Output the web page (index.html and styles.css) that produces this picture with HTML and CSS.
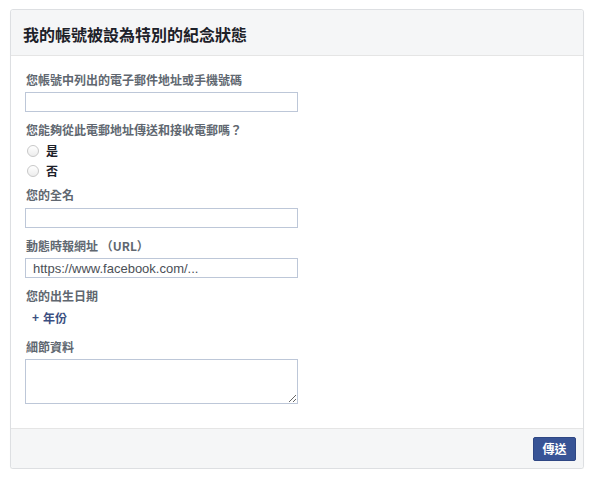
FILE: index.html
```html
<!DOCTYPE html>
<html lang="zh-Hant">
<head>
<meta charset="utf-8">
<title>紀念狀態</title>
<link rel="stylesheet" href="styles.css">
</head>
<body>
<div class="page">
  <form class="card">
    <div class="card-header"><h2 class="title">我的帳號被設為特別的紀念狀態</h2></div>
    <div class="card-body">
      <label class="label first">您帳號中列出的電子郵件地址或手機號碼</label>
      <input class="field" type="text">
      <label class="label gap10">您能夠從此電郵地址傳送和接收電郵嗎？</label>
      <div class="radios">
        <label class="radio-row"><span class="radio"></span><span class="radio-text">是</span></label>
        <label class="radio-row"><span class="radio"></span><span class="radio-text">否</span></label>
      </div>
      <label class="label after-radio">您的全名</label>
      <input class="field" type="text">
      <label class="label gap10">動態時報網址 （URL）</label>
      <input class="field url" type="text" placeholder="https://www.facebook.com/...">
      <label class="label gap10">您的出生日期</label>
      <div class="year"><span class="plus">+</span><span>年份</span></div>
      <label class="label detail">細節資料</label>
      <textarea class="area"></textarea>
    </div>
    <div class="card-footer"><button class="send" type="button">傳送</button></div>
  </form>
</div>
</body>
</html>
```
FILE: styles.css
```css
* { box-sizing: border-box; }
html, body { margin: 0; padding: 0; background: #fff; }
body { font-family: "Noto Sans CJK TC", "Liberation Sans", sans-serif; color: #1d2129; }
.page { padding: 9px 17px 0 10px; }
.card {
  display: flex; flex-direction: column;
  width: 574px;
  border: 1px solid #dddfe2;
  border-radius: 3px;
  background: #fff;
  box-shadow: 0 1px 1px rgba(0,0,0,0.04);
}
.card-header {
  height: 46px;
  background: #f5f6f7;
  border-bottom: 1px solid #e5e5e5;
  display: flex; align-items: center;
  padding: 2px 0 0 12px;
  border-radius: 3px 3px 0 0;
}
.title { margin: 0; font-size: 16px; font-weight: bold; color: #1d2129; line-height: 20px; height: 20px; }
.card-body { display: flex; flex-direction: column; align-items: flex-start; padding: 16px 14px 24px 14px; }
.label {
  display: block; height: 16px;
  font-size: 12px; font-weight: bold; color: #606770; line-height: 16px;
  margin: 0 0 4px 0; padding-left: 1px;
  white-space: nowrap;
}
.label.gap10 { margin-top: 10px; }
.label.after-radio { margin-top: 6px; margin-bottom: 5px; }
.label.detail { margin-top: 13px; }
.field {
  display: block;
  width: 273px; height: 20px;
  border: 1px solid #bdc7d8;
  margin: 0; padding: 0 7px;
  font-family: "Liberation Sans", "Noto Sans CJK TC", sans-serif;
  font-size: 13px; color: #1d2129;
  outline: none;
  border-radius: 0;
}
.field::placeholder { color: #4b4f56; }
.radios { display: flex; flex-direction: column; margin-top: -1px; }
.radio-row { display: flex; align-items: center; height: 20px; padding-left: 2px; }
.radio {
  width: 12px; height: 12px; border-radius: 50%;
  border: 1px solid #c8c8c8;
  background: linear-gradient(#ffffff, #ededed);
}
.radio-text { font-size: 12px; font-weight: bold; color: #1d2129; margin-left: 7px; line-height: 16px; height: 16px; }
.year {
  display: flex; align-items: center; height: 16px;
  font-size: 12px; font-weight: bold; color: #3b4f81; line-height: 16px;
  margin: 2px 0 0 7px;
}
.plus { font-family: "Liberation Sans", sans-serif; font-size: 12px; margin-right: 4px; }
.area {
  display: block;
  width: 273px; height: 45px;
  border: 1px solid #bdc7d8;
  margin: 0; padding: 3px;
  resize: both;
  outline: none;
  border-radius: 0;
  font-family: "Liberation Sans", sans-serif;
}
.card-footer {
  height: 40px;
  background: #f5f6f7;
  border-top: 1px solid #e5e5e5;
  display: flex; align-items: center; justify-content: flex-end;
  padding-right: 7px;
  border-radius: 0 0 3px 3px;
}
.send {
  width: 43px; height: 24px;
  background: #385496;
  border: 1px solid #2f4784;
  border-radius: 2px;
  color: #fff;
  font-family: "Noto Sans CJK TC", sans-serif;
  font-size: 12px; font-weight: bold; line-height: 16px;
  padding: 0;
}
```
